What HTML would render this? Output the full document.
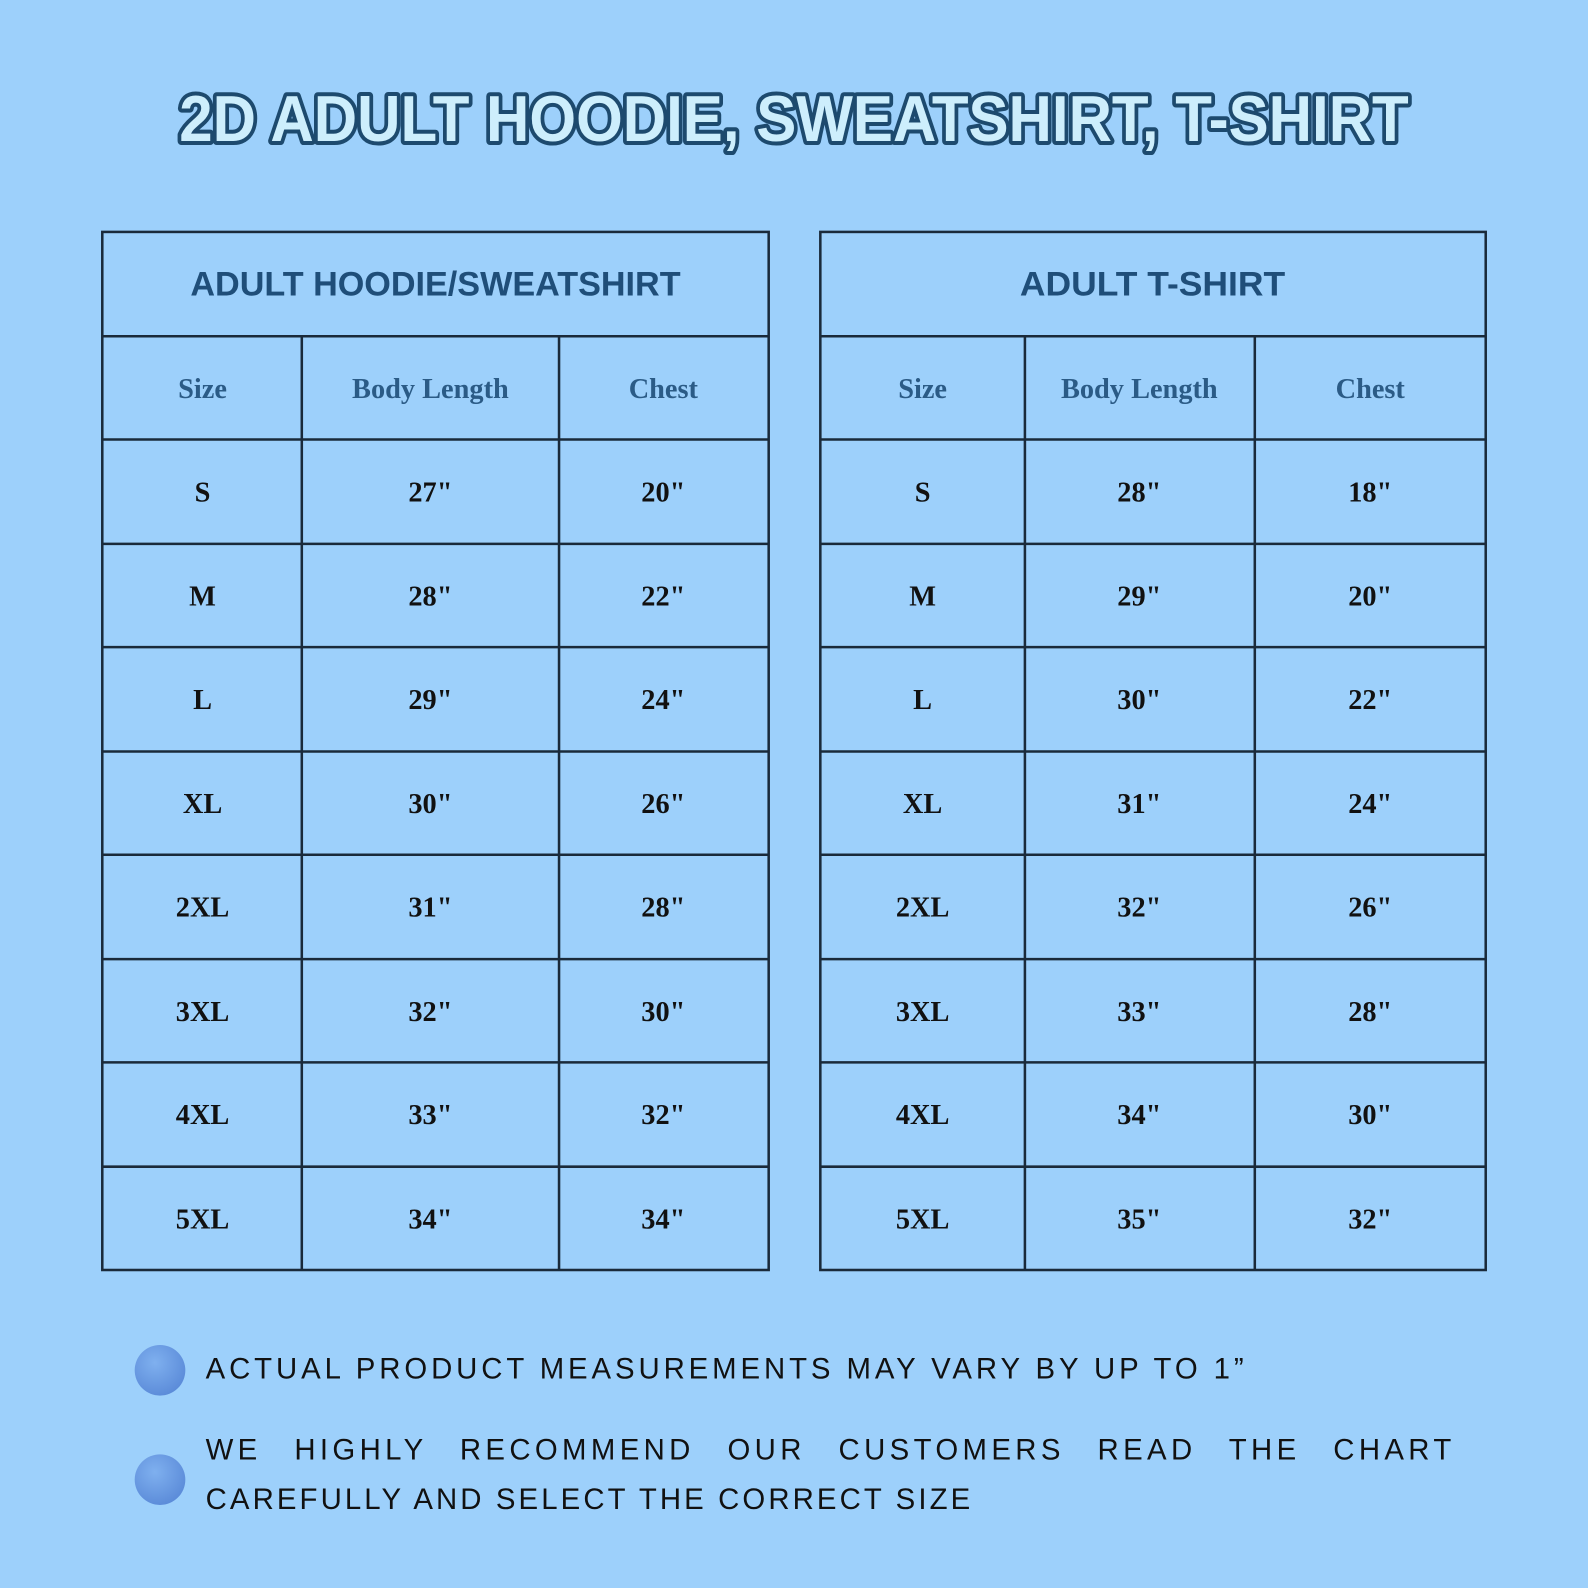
<!DOCTYPE html>
<html><head><meta charset="utf-8"><style>
html,body{margin:0;padding:0;background:#9dd0fb;}
svg{display:block}
.tt{font-family:"Liberation Sans",sans-serif;font-weight:bold;}
.hd{font-family:"Liberation Serif",serif;font-weight:bold;fill:#2b5b86;font-size:28px;}
.dt{font-family:"Liberation Serif",serif;font-weight:bold;fill:#111;font-size:28px;}
.fn{font-family:"Liberation Sans",sans-serif;fill:#111;font-size:29px;}
</style></head><body>
<svg width="1588" height="1588" viewBox="0 0 1568 1568" xmlns="http://www.w3.org/2000/svg">
<defs><radialGradient id="g" cx="40%" cy="35%" r="70%"><stop offset="0" stop-color="#7fb0ef"/><stop offset="1" stop-color="#5a8ad8"/></radialGradient></defs>
<rect width="1568" height="1568" fill="#9dd0fb"/>
<text class="tt" x="177" y="139" font-size="64" textLength="1214" lengthAdjust="spacingAndGlyphs" fill="#cdeefc" stroke="#1d4a6e" stroke-width="8" stroke-linejoin="round" paint-order="stroke">2D ADULT HOODIE, SWEATSHIRT, T-SHIRT</text>

<g fill="none" stroke="#1a2a3a" stroke-width="2.5">
<rect x="101" y="229" width="658" height="1025"/>
<rect x="810" y="229" width="657" height="1025"/>
<line x1="298" y1="332" x2="298" y2="1254"/><line x1="552" y1="332" x2="552" y2="1254"/>
<line x1="1012" y1="332" x2="1012" y2="1254"/><line x1="1239" y1="332" x2="1239" y2="1254"/>
<g id="rl">
<line x1="101" y1="332" x2="759" y2="332"/><line x1="101" y1="434" x2="759" y2="434"/><line x1="101" y1="537" x2="759" y2="537"/><line x1="101" y1="639" x2="759" y2="639"/><line x1="101" y1="742" x2="759" y2="742"/><line x1="101" y1="844" x2="759" y2="844"/><line x1="101" y1="947" x2="759" y2="947"/><line x1="101" y1="1049" x2="759" y2="1049"/><line x1="101" y1="1152" x2="759" y2="1152"/>
</g>
<use href="#rl" transform="translate(709,0)"/>
</g>

<text class="tt" x="430" y="292" font-size="34" fill="#1f4e79" text-anchor="middle" textLength="484" lengthAdjust="spacingAndGlyphs">ADULT HOODIE/SWEATSHIRT</text>
<text class="tt" x="1138" y="292" font-size="34" fill="#1f4e79" text-anchor="middle" textLength="262" lengthAdjust="spacingAndGlyphs">ADULT T-SHIRT</text>

<g class="hd" text-anchor="middle">
<text x="200" y="393">Size</text><text x="425" y="393">Body Length</text><text x="655" y="393">Chest</text>
<text x="911" y="393">Size</text><text x="1125" y="393">Body Length</text><text x="1353" y="393">Chest</text>
</g>
<g class="dt" text-anchor="middle">
<text x="200" y="495">S</text><text x="425" y="495">27"</text><text x="655" y="495">20"</text>
<text x="200" y="598">M</text><text x="425" y="598">28"</text><text x="655" y="598">22"</text>
<text x="200" y="700">L</text><text x="425" y="700">29"</text><text x="655" y="700">24"</text>
<text x="200" y="803">XL</text><text x="425" y="803">30"</text><text x="655" y="803">26"</text>
<text x="200" y="905">2XL</text><text x="425" y="905">31"</text><text x="655" y="905">28"</text>
<text x="200" y="1008">3XL</text><text x="425" y="1008">32"</text><text x="655" y="1008">30"</text>
<text x="200" y="1110">4XL</text><text x="425" y="1110">33"</text><text x="655" y="1110">32"</text>
<text x="200" y="1213">5XL</text><text x="425" y="1213">34"</text><text x="655" y="1213">34"</text>
<text x="911" y="495">S</text><text x="1125" y="495">28"</text><text x="1353" y="495">18"</text>
<text x="911" y="598">M</text><text x="1125" y="598">29"</text><text x="1353" y="598">20"</text>
<text x="911" y="700">L</text><text x="1125" y="700">30"</text><text x="1353" y="700">22"</text>
<text x="911" y="803">XL</text><text x="1125" y="803">31"</text><text x="1353" y="803">24"</text>
<text x="911" y="905">2XL</text><text x="1125" y="905">32"</text><text x="1353" y="905">26"</text>
<text x="911" y="1008">3XL</text><text x="1125" y="1008">33"</text><text x="1353" y="1008">28"</text>
<text x="911" y="1110">4XL</text><text x="1125" y="1110">34"</text><text x="1353" y="1110">30"</text>
<text x="911" y="1213">5XL</text><text x="1125" y="1213">35"</text><text x="1353" y="1213">32"</text>
</g>

<circle cx="158" cy="1353" r="25" fill="url(#g)"/>
<circle cx="158" cy="1461" r="25" fill="url(#g)"/>
<text class="fn" x="203" y="1361" textLength="1025" lengthAdjust="spacing">ACTUAL PRODUCT MEASUREMENTS MAY VARY BY UP TO 1”</text>
<text class="fn" x="203" y="1441" textLength="1230" lengthAdjust="spacing" word-spacing="20">WE HIGHLY RECOMMEND OUR CUSTOMERS READ THE CHART</text>
<text class="fn" x="203" y="1490" textLength="755" lengthAdjust="spacing">CAREFULLY AND SELECT THE CORRECT SIZE</text>
</svg>
</body></html>
